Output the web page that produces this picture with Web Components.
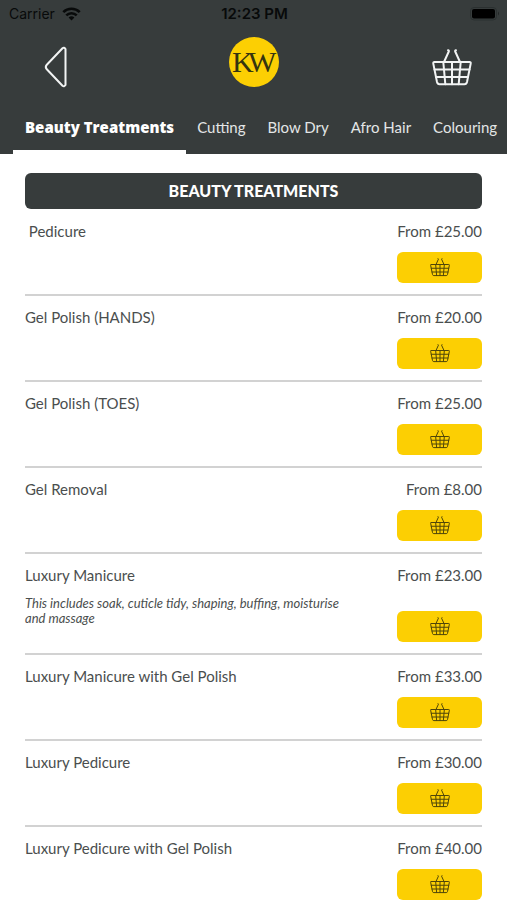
<!DOCTYPE html>
<html lang="en">
<head>
<meta charset="utf-8">
<meta name="viewport" content="width=device-width, initial-scale=1">
<title>Beauty Treatments</title>
<style>
  body {
    margin: 0;
    background: #fff;
    --slate: #373c3c;
    --ink: #4a4e4e;
    --gold: #fccf03;
    --rule: #d2d2d2;
    color: var(--ink);
    font-family: Lato, "Open Sans", sans-serif;
    font-size: 15px;
    line-height: 20px;
  }
</style>
</head>
<body>
<salon-app></salon-app>

<script>
const define = (name, html, setup) => {
  const template = document.createElement('template');
  template.innerHTML = html;
  customElements.define(name, class extends HTMLElement {
    constructor() {
      super();
      this.attachShadow({ mode: 'open' }).append(template.content.cloneNode(true));
    }
    connectedCallback() { if (setup) setup(this, this.shadowRoot); }
  });
};

define('basket-icon', `
  <style>
    :host { display: block; line-height: 0; }
    svg { width: 100%; height: auto; fill: none; stroke: currentColor; stroke-width: 2; stroke-linecap: round; stroke-linejoin: round; }
  </style>
  <svg viewBox="0 0 40 37" aria-hidden="true">
    <path d="M2.500 13h35q1.500 0 1.200 1.600l-3.700 18.400q-.500 2.200-2.500 2.200h-25q-2 0-2.500-2.200l-3.700-18.400q-.300-1.600 1.200-1.600z"/>
    <path d="M2.500 20.500h35M4 28h32M11.300 13l2 22.200M20 13v22.200M28.700 13l-2 22.200"/>
    <path d="M12 13 16.800 2.500q.500-1-.800-1.300M28 13 23.200 2.500q-.500-1 .800-1.300"/>
  </svg>`);

define('status-bar', `
  <style>
    :host { display: grid; grid-template-columns: 1fr auto 1fr; align-items: center; height: 28px; padding: 0 7px 0 9px; color: #080a0a; font: 14px/20px Inter, "Liberation Sans", sans-serif; }
    .carrier { display: flex; align-items: center; gap: 7px; }
    .carrier svg { width: 19px; height: 14px; }
    .time { font-weight: 600; font-size: 15px; }
    .battery { justify-self: end; width: 30px; height: 14px; }
  </style>
  <span class="carrier">Carrier
    <svg viewBox="0 0 19 14" fill="none" stroke="currentColor" stroke-width="2.600" aria-hidden="true">
      <path d="M1.300 5.200a11.600 11.600 0 0 1 16.400 0M4.300 8.400a7.400 7.400 0 0 1 10.400 0"/><path d="M9.500 13.500 6.600 10.600a4.100 4.100 0 0 1 5.800 0z" fill="currentColor" stroke="none"/>
    </svg>
  </span>
  <span class="time">12:23 PM</span>
  <svg class="battery" viewBox="0 0 30 14" aria-hidden="true">
    <rect x=".5" y=".5" width="26" height="12.500" rx="3.500" fill="none" stroke="#2b3030"/>
    <rect x="2" y="2" width="23" height="9.500" rx="2" fill="#000"/>
    <path d="M28 4.500q2 2 0 4z" fill="#222727"/>
  </svg>`);

define('brand-logo', `
  <style>
    :host { display: grid; place-items: center; width: 50px; height: 50px; border-radius: 50%; background: var(--gold); color: #35340f; }
    svg { width: 50px; height: 50px; }
    text { font: 30px "Liberation Serif", serif; fill: currentColor; }
  </style>
  <svg viewBox="0 0 50 50" role="img" aria-label="KW"><text x="3 19" y="35">KW</text></svg>`);

define('app-bar', `
  <style>
    :host { display: grid; grid-template-columns: 1fr auto 1fr; align-items: center; height: 76px; box-sizing: border-box; padding: 0 35px 8px 36px; color: #f2f4f4; }
    button { padding: 0; border: 0; background: none; color: inherit; cursor: pointer; }
    .back { justify-self: start; width: 40px; height: 44px; margin-top: 10px; }
    .back svg { width: 40px; height: 44px; }
    .basket { justify-self: end; width: 40px; margin-top: 10px; }
  </style>
  <button class="back" aria-label="Back">
    <svg viewBox="0 0 40 44" fill="none" stroke="currentColor" stroke-width="2" stroke-linejoin="round" aria-hidden="true">
      <path d="M26.500 3.300 10.800 19.700q-2 2.300 0 4.600L26.500 40.700q1.600 1.300 3-.700V4q-1.400-2-3-.700z"/>
    </svg>
  </button>
  <brand-logo></brand-logo>
  <button class="basket" aria-label="Basket"><basket-icon></basket-icon></button>`);

define('category-tab', `
  <style>
    :host { display: block; flex: none; }
    button { display: block; height: 50px; padding: 0 11px; border: 0; border-bottom: 4px solid transparent; background: none; color: #e3e6e6; font: inherit; white-space: nowrap; cursor: pointer; }
    :host([selected]) button { padding: 0 12px; color: #fff; font-family: "Open Sans", sans-serif; font-weight: 800; border-bottom-color: #fff; }
  </style>
  <button role="tab"><slot></slot></button>`,
  (host, root) => root.querySelector('button').setAttribute('aria-selected', host.hasAttribute('selected')));

define('category-tabs', `
  <style>
    :host { display: flex; padding-left: 13px; overflow: hidden; }
  </style>
  <slot></slot>`, host => host.setAttribute('role', 'tablist'));

define('treatment-row', `
  <style>
    :host { display: flex; justify-content: space-between; padding: 11px 0; border-bottom: 2px solid var(--rule); }
    .text { flex: 0 1 70%; }
    h3, p { margin: 0; font-weight: 400; font-size: 15px; white-space: pre-wrap; }
    .note { display: block; margin: 11px 0 16px; font-size: 13px; line-height: 15px; font-style: italic; }
    .note[hidden] { display: none; }
    .buy { display: flex; flex-direction: column; justify-content: space-between; align-items: flex-end; gap: 11px; }
    button { display: grid; place-items: center; width: 85px; height: 31px; padding: 0; border: 0; border-radius: 6px; background: var(--gold); color: #4f4609; cursor: pointer; }
    basket-icon { width: 20px; }
  </style>
  <div class="text"><h3></h3><p class="note"><slot></slot></p></div>
  <div class="buy"><p class="price"></p><button><basket-icon></basket-icon></button></div>`,
  (host, root) => {
    const name = host.getAttribute('name');
    root.querySelector('h3').textContent = name;
    root.querySelector('.price').textContent = 'From £' + host.getAttribute('price');
    root.querySelector('button').setAttribute('aria-label', 'Add ' + name.trim() + ' to basket');
    root.querySelector('.note').hidden = !host.hasAttribute('noted');
  });

define('treatment-list', `
  <style>
    :host { display: block; padding: 19px 25px 0; }
    h2 { margin: 0 0 1px; padding: 8px; border-radius: 6px; background: var(--slate); color: #fff; font-size: 16px; line-height: 20px; font-weight: 900; text-align: center; text-transform: uppercase; }
  </style>
  <h2></h2>
  <slot></slot>`, (host, root) => { root.querySelector('h2').textContent = host.getAttribute('heading'); });

define('salon-app', `
  <style>
    :host { display: block; height: 100vh; overflow: hidden; }
    header { background: var(--slate); }
  </style>
  <header>
    <status-bar></status-bar>
    <app-bar></app-bar>
    <category-tabs>
      <category-tab selected>Beauty Treatments</category-tab>
      <category-tab>Cutting</category-tab>
      <category-tab>Blow Dry</category-tab>
      <category-tab>Afro Hair</category-tab>
      <category-tab>Colouring</category-tab>
    </category-tabs>
  </header>
  <main>
    <treatment-list heading="Beauty Treatments">
      <treatment-row name=" Pedicure" price="25.00"></treatment-row>
      <treatment-row name="Gel Polish (HANDS)" price="20.00"></treatment-row>
      <treatment-row name="Gel Polish (TOES)" price="25.00"></treatment-row>
      <treatment-row name="Gel Removal" price="8.00"></treatment-row>
      <treatment-row name="Luxury Manicure" price="23.00" noted>This includes soak, cuticle tidy, shaping, buffing, moisturise and massage</treatment-row>
      <treatment-row name="Luxury Manicure with Gel Polish" price="33.00"></treatment-row>
      <treatment-row name="Luxury Pedicure" price="30.00"></treatment-row>
      <treatment-row name="Luxury Pedicure with Gel Polish" price="40.00"></treatment-row>
    </treatment-list>
  </main>`);
</script>
</body>
</html>
